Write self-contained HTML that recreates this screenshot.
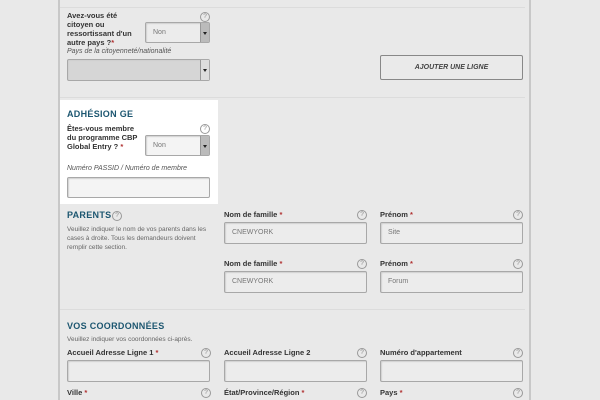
<!DOCTYPE html>
<html><head><meta charset="utf-8"><style>
body{margin:0;width:600px;height:400px;overflow:hidden;background:#e9e9e9;font-family:"Liberation Sans",sans-serif;position:relative;color:#333}
div,span{position:absolute;box-sizing:border-box}
.l{font-size:7.5px;font-weight:bold;color:#333;line-height:9px}
.i{font-size:7px;font-style:italic;color:#555}
.inp{border:1px solid #a8a8a8;border-radius:2px;background:#ececec;box-shadow:inset 1px 1px 1px #d0d0d0;font-size:7px;color:#777;padding:0 0 0 7px;line-height:20px}
.q{width:10px;height:10px;border:1px solid #999;border-radius:50%;font-size:6.5px;color:#888;text-align:center;line-height:8px}
.h{font-size:9px;font-weight:bold;color:#1c5670;letter-spacing:.3px}
.d{font-size:6.5px;color:#666;line-height:9px}
.r{color:#b03030}
.sep{height:1px;background:#dcdcdc}
.arr{right:0;top:0;width:9px;height:100%;background:#bbb;border-left:1px solid #999}
.arr:after{content:"";position:absolute;left:2px;top:9px;border:2px solid transparent;border-top:3px solid #222}
</style></head><body>
<div style="left:58px;top:0;width:2px;height:400px;background:#c8c8c8"></div>
<div style="left:529px;top:0;width:2px;height:400px;background:#c8c8c8"></div>
<div class="sep" style="left:60px;top:7px;width:465px"></div>

<div class="l" style="left:67px;top:11px;width:80px">Avez-vous été<br>citoyen ou<br>ressortissant d'un<br>autre pays ?<span class="r" style="position:static">*</span></div>
<div class="q" style="left:200px;top:12px">?</div>
<div class="inp" style="left:145px;top:22px;width:65px;height:21px">Non<div class="arr"></div></div>
<div class="i" style="left:67px;top:48px">Pays de la citoyenneté/nationalité</div>
<div class="inp" style="left:67px;top:59px;width:143px;height:22px;background:#d6d6d6"><div class="arr" style="background:#ddd"></div></div>
<div style="left:380px;top:55px;width:143px;height:25px;border:1px solid #888;border-radius:2px;background:#eaeaea;font-size:7px;font-weight:bold;font-style:italic;color:#444;text-align:center;line-height:23px">AJOUTER UNE LIGNE</div>
<div class="sep" style="left:60px;top:97px;width:465px"></div>

<div style="left:60px;top:100px;width:158px;height:104px;background:#fff"></div>
<div class="h" style="left:67px;top:109px">ADHÉSION GE</div>
<div class="l" style="left:67px;top:124px">Êtes-vous membre<br>du programme CBP<br>Global Entry ? <span class="r" style="position:static">*</span></div>
<div class="q" style="left:200px;top:124px">?</div>
<div class="inp" style="left:145px;top:135px;width:65px;height:21px;background:#f4f4f4">Non<div class="arr"></div></div>
<div class="i" style="left:67px;top:165px">Numéro PASSID / Numéro de membre</div>
<div class="inp" style="left:67px;top:177px;width:143px;height:21px;background:#f4f4f4"></div>

<div class="h" style="left:67px;top:210px">PARENTS</div>
<div class="q" style="left:112px;top:211px">?</div>
<div class="d" style="left:67px;top:225px;width:150px">Veuillez indiquer le nom de vos parents dans les cases à droite. Tous les demandeurs doivent remplir cette section.</div>
<div class="l" style="left:224px;top:210px">Nom de famille <span class="r" style="position:static">*</span></div>
<div class="q" style="left:357px;top:210px">?</div>
<div class="inp" style="left:224px;top:222px;width:143px;height:22px">CNEWYORK</div>
<div class="l" style="left:380px;top:210px">Prénom <span class="r" style="position:static">*</span></div>
<div class="q" style="left:513px;top:210px">?</div>
<div class="inp" style="left:380px;top:222px;width:143px;height:22px">Site</div>
<div class="l" style="left:224px;top:259px">Nom de famille <span class="r" style="position:static">*</span></div>
<div class="q" style="left:357px;top:259px">?</div>
<div class="inp" style="left:224px;top:271px;width:143px;height:22px">CNEWYORK</div>
<div class="l" style="left:380px;top:259px">Prénom <span class="r" style="position:static">*</span></div>
<div class="q" style="left:513px;top:259px">?</div>
<div class="inp" style="left:380px;top:271px;width:143px;height:22px">Forum</div>
<div class="sep" style="left:60px;top:309px;width:465px"></div>

<div class="h" style="left:67px;top:321px">VOS COORDONNÉES</div>
<div class="d" style="left:67px;top:335px">Veuillez indiquer vos coordonnées ci-après.</div>
<div class="l" style="left:67px;top:348px">Accueil Adresse Ligne 1 <span class="r" style="position:static">*</span></div>
<div class="q" style="left:201px;top:348px">?</div>
<div class="inp" style="left:67px;top:360px;width:143px;height:22px"></div>
<div class="l" style="left:224px;top:348px">Accueil Adresse Ligne 2</div>
<div class="q" style="left:357px;top:348px">?</div>
<div class="inp" style="left:224px;top:360px;width:143px;height:22px"></div>
<div class="l" style="left:380px;top:348px">Numéro d'appartement</div>
<div class="q" style="left:513px;top:348px">?</div>
<div class="inp" style="left:380px;top:360px;width:143px;height:22px"></div>
<div class="l" style="left:67px;top:388px">Ville <span class="r" style="position:static">*</span></div>
<div class="q" style="left:201px;top:388px">?</div>
<div class="l" style="left:224px;top:388px">État/Province/Région <span class="r" style="position:static">*</span></div>
<div class="q" style="left:357px;top:388px">?</div>
<div class="l" style="left:380px;top:388px">Pays <span class="r" style="position:static">*</span></div>
<div class="q" style="left:513px;top:388px">?</div>
</body></html>
